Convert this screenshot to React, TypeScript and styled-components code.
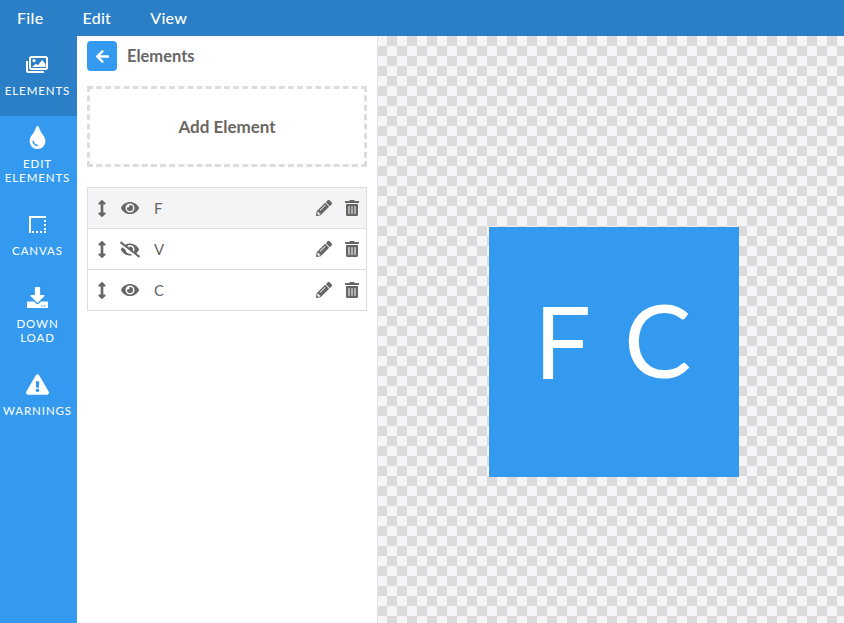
import React from "react";
import styled, { createGlobalStyle } from "styled-components";
import {
  FaArrowLeft,
  FaArrowsAltV,
  FaDownload,
  FaExclamationTriangle,
  FaEye,
  FaEyeSlash,
  FaPencilAlt,
  FaTint,
  FaTrashAlt,
} from "react-icons/fa";

const GlobalStyle = createGlobalStyle`
  html, body {
    margin: 0;
    padding: 0;
    height: 100%;
    overflow: hidden;
    font-family: "Lato", "Open Sans", sans-serif;
  }
  * { box-sizing: border-box; }
`;

const Page = styled.div`
  width: 844px;
  height: 623px;
  display: flex;
  flex-direction: column;
`;

const MenuBar = styled.div`
  height: 36px;
  flex-shrink: 0;
  display: flex;
  align-items: center;
  background: #2a7fc6;
  padding-left: 17px;
  gap: 39px;
`;

const MenuItem = styled.span`
  color: #fff;
  font-size: 16px;
  font-weight: 500;
  letter-spacing: 0.3px;
  margin-top: -1px;
`;

const Body = styled.div`
  flex: 1;
  display: flex;
  min-height: 0;
`;

const Sidebar = styled.div`
  width: 77px;
  flex-shrink: 0;
  background: #349af0;
  display: flex;
  flex-direction: column;
`;

const NavItem = styled.div<{ $active?: boolean; $height: number; $top?: number }>`
  height: ${(p) => p.$height}px;
  background: ${(p) => (p.$active ? "#2a7fc6" : "transparent")};
  color: #fff;
  display: flex;
  flex-direction: column;
  align-items: center;
  padding: ${(p) => p.$top ?? 17}px 2px 0 0;
  font-size: 11.5px;
  line-height: 14px;
  letter-spacing: 0.9px;
  text-align: center;
  white-space: nowrap;

  svg {
    display: block;
    height: 23px;
    margin-bottom: 8px;
    flex-shrink: 0;
  }
`;

const Panel = styled.div`
  width: 301px;
  flex-shrink: 0;
  background: #fff;
  padding: 5px 10px 0;
  border-right: 1px solid #e2e2e2;
`;

const PanelHeader = styled.div`
  display: flex;
  align-items: center;
  gap: 10px;
  height: 30px;
`;

const BackButton = styled.div`
  width: 30px;
  height: 30px;
  border-radius: 4px;
  background: #349af0;
  color: #fff;
  display: flex;
  align-items: center;
  justify-content: center;
  font-size: 15px;
`;

const PanelTitle = styled.span`
  color: #666;
  font-size: 16.5px;
  font-weight: 700;
  margin-top: -1px;
`;

const AddElement = styled.div`
  margin-top: 15px;
  height: 81px;
  border: 3px dashed #ddd;
  display: flex;
  align-items: center;
  justify-content: center;
  color: #6b675f;
  font-size: 17px;
  font-weight: 700;
`;

const ElementList = styled.div`
  margin-top: 20px;
  border: 1px solid #ddd;
`;

const ElementRow = styled.div<{ $selected?: boolean }>`
  height: 41px;
  display: flex;
  align-items: center;
  padding: 0 6px 0 9px;
  color: #666;
  background: ${(p) => (p.$selected ? "#f4f4f6" : "#fff")};
  border-top: 1px solid #ddd;

  &:first-child {
    height: 40px;
    border-top: none;
  }
`;

const DragHandle = styled.span`
  width: 10px;
  display: flex;
  justify-content: center;
  font-size: 17px;
`;

const Visibility = styled.span<{ $hidden: boolean }>`
  width: 20px;
  margin-left: 13px;
  display: flex;
  justify-content: center;
  font-size: ${(p) => (p.$hidden ? 21 : 18)}px;
`;

const ElementName = styled.span`
  margin-left: 14px;
  font-size: 15px;
  flex: 1;
`;

const RowAction = styled.span`
  display: flex;
  justify-content: center;
  width: 16px;
  font-size: 16px;
  margin-left: 12px;
`;

const Canvas = styled.div`
  flex: 1;
  padding: 191px 0 0 111px;
  background-color: #f5f5f7;
  background-image: repeating-conic-gradient(#dbdbdb 0 25%, transparent 0 50%);
  background-size: 20px 20px;
  background-position: -1px 0;
`;

const Artboard = styled.div`
  width: 250px;
  height: 250px;
  background: #349af0;
  color: #fff;
  position: relative;
  font-size: 101px;
  font-weight: 400;
`;

const Letter = styled.span<{ $left: number; $top: number }>`
  position: absolute;
  left: ${(p) => p.$left}px;
  top: ${(p) => p.$top}px;
  line-height: 100px;
`;

const ImagesIcon = () => (
  <svg viewBox="0 0 23 23" width="23" height="23" fill="#fff">
    <rect x="4" y="4" width="17" height="12" rx="1.5" fill="none" stroke="#fff" strokeWidth="2" />
    <circle cx="8" cy="7.6" r="1.6" />
    <path d="M6 14l4-3.2 2 1.5 4-5.3 3.5 4V14z" />
    <path d="M1 8v9.5A1.5 1.5 0 0 0 2.500 19H18" fill="none" stroke="#fff" strokeWidth="2" />
  </svg>
);

const CanvasIcon = () => (
  <svg viewBox="0 0 23 23" width="23" height="23" fill="#fff">
    <path d="M3 3h17v2H5v15H3z" />
    <path d="M18 7h2v2h-2zM18 11h2v2h-2zM18 15h2v2h-2zM6 18h2v2H6zM10 18h2v2h-2zM14 18h2v2h-2zM18 18h2v2h-2z" />
  </svg>
);

const rows = [
  { name: "F", hidden: false, selected: true },
  { name: "V", hidden: true, selected: false },
  { name: "C", hidden: false, selected: false },
];

export default function App() {
  return (
    <Page>
      <GlobalStyle />
      <MenuBar>
        <MenuItem>File</MenuItem>
        <MenuItem>Edit</MenuItem>
        <MenuItem>View</MenuItem>
      </MenuBar>
      <Body>
        <Sidebar>
          <NavItem $active $height={80}>
            <ImagesIcon />
            ELEMENTS
          </NavItem>
          <NavItem $height={87} $top={10}>
            <FaTint size={23} />
            EDIT
            <br />
            ELEMENTS
          </NavItem>
          <NavItem $height={73} $top={10}>
            <CanvasIcon />
            CANVAS
          </NavItem>
          <NavItem $height={87} $top={10}>
            <FaDownload size={21} />
            DOWN
            <br />
            LOAD
          </NavItem>
          <NavItem $height={73} $top={10}>
            <FaExclamationTriangle size={23} />
            WARNINGS
          </NavItem>
        </Sidebar>
        <Panel>
          <PanelHeader>
            <BackButton>
              <FaArrowLeft />
            </BackButton>
            <PanelTitle>Elements</PanelTitle>
          </PanelHeader>
          <AddElement>Add Element</AddElement>
          <ElementList>
            {rows.map((row) => (
              <ElementRow key={row.name} $selected={row.selected}>
                <DragHandle>
                  <FaArrowsAltV />
                </DragHandle>
                <Visibility $hidden={row.hidden}>{row.hidden ? <FaEyeSlash /> : <FaEye />}</Visibility>
                <ElementName>{row.name}</ElementName>
                <RowAction>
                  <FaPencilAlt />
                </RowAction>
                <RowAction>
                  <FaTrashAlt />
                </RowAction>
              </ElementRow>
            ))}
          </ElementList>
        </Panel>
        <Canvas>
          <Artboard>
            <Letter $left={45} $top={63}>F</Letter>
            <Letter $left={135} $top={62}>C</Letter>
          </Artboard>
        </Canvas>
      </Body>
    </Page>
  );
}
